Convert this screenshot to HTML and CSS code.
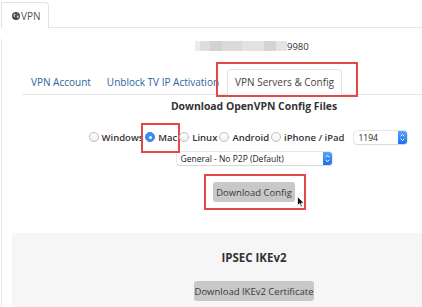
FILE: index.html
```html
<!DOCTYPE html>
<html>
<head>
<meta charset="utf-8">
<link rel="stylesheet" href="styles.css">
</head>
<body>
<div class="page">
  <div class="topbar">
    <div class="toptab">
      <svg class="globe" width="8" height="8" viewBox="0 0 8 8"><circle cx="4" cy="4" r="4" fill="#444"/><path d="M1.6 1.8 L3.4 1.4 L3.8 2.6 L2.8 3.4 L3.2 4.6 L2.2 5.6 L1.4 4.2 Z M4.6 1 L6.2 1.6 L5.4 2.4 Z M4.6 3.6 L6.6 3.4 L7 5 L5.6 6.6 L4.8 5.4 Z" fill="#bbb"/></svg>
      <span>VPN</span>
    </div>
  </div>
  <div class="panel">
    <div class="account"><span class="blur"><i class="b1"></i><i class="b2"></i><i class="b3"></i><i class="b4"></i><i class="b5"></i><i class="b6"></i><i class="b7"></i></span>9980</div>
    <div class="subtabs">
      <a class="subtab">VPN Account</a>
      <a class="subtab">Unblock TV IP Activation</a>
      <a class="subtab active">VPN Servers &amp; Config<span class="mark mark-tab"></span></a>
    </div>
    <div class="config">
      <h3 class="title">Download OpenVPN Config Files</h3>
      <div class="oslist">
        <label class="os"><span class="radio"></span>Windows</label>
        <label class="os os-mac"><span class="radio on"></span>Mac<span class="mark mark-mac"></span></label>
        <label class="os"><span class="radio"></span>Linux</label>
        <label class="os"><span class="radio"></span>Android</label>
        <label class="os"><span class="radio"></span>iPhone / iPad</label>
        <div class="select port"><span class="sel-text">1194</span><span class="stepper"><svg width="5" height="9" viewBox="0 0 5 9"><path d="M0.8 3.2 L2.5 1.4 L4.2 3.2 M0.8 5.8 L2.5 7.6 L4.2 5.8" fill="none" stroke="#fff" stroke-width="1"/></svg></span></div>
      </div>
      <div class="select profile"><span class="sel-text">General - No P2P (Default)</span><span class="stepper"><svg width="5" height="9" viewBox="0 0 5 9"><path d="M0.8 3.2 L2.5 1.4 L4.2 3.2 M0.8 5.8 L2.5 7.6 L4.2 5.8" fill="none" stroke="#fff" stroke-width="1"/></svg></span></div>
      <div class="btnwrap">
        <button class="btn btn-config">Download Config</button>
        <span class="mark mark-btn"></span>
        <svg class="cursor" width="8" height="12" viewBox="0 0 8 12"><path d="M0.5 0.5 L0.5 9.5 L2.6 7.6 L4 11 L5.4 10.4 L4 7.2 L7 7.2 Z" fill="#111" stroke="#fff" stroke-width="0.8"/></svg>
      </div>
    </div>
    <div class="ipsec">
      <h3 class="ipsec-title">IPSEC IKEv2</h3>
      <button class="btn btn-cert">Download IKEv2 Certificate</button>
    </div>
  </div>
</div>
</body>
</html>
```

FILE: styles.css
```css
html, body {
  margin: 0;
  padding: 0;
  overflow: hidden;
  background: #fff;
}
body {
  font-family: "Open Sans", "Liberation Sans", sans-serif;
  color: #333;
}
.page {
  width: 422px;
  height: 307px;
  overflow: hidden;
  box-sizing: border-box;
  padding-left: 1px;
}
.topbar {
  display: flex;
  border-bottom: 1px solid #e8e8e8;
  padding-top: 2px;
  box-sizing: border-box;
  height: 28px;
}
.toptab {
  width: 48px;
  height: 26px;
  box-sizing: border-box;
  border: 1px solid #e2e2e2;
  border-bottom: none;
  border-radius: 0 4px 0 0;
  background: #fff;
  margin-bottom: -1px;
  display: flex;
  align-items: center;
  padding-left: 10px;
  font-size: 10px;
  color: #555;
  gap: 1px;
}
.globe { flex: none; }
.panel {
  border-left: 1px solid #e6e6e6;
  padding-left: 10px;
}
.account {
  margin-top: 11px;
  margin-left: 183px;
  height: 14px;
  display: flex;
  align-items: center;
  font-size: 9.5px;
  color: #333;
}
.blur {
  display: flex;
  height: 10px;
  width: 92px;
}
.blur i { display: block; height: 10px; }
.b1 { width: 5px; background: #ececec; }
.b2 { width: 10px; background: #dedede; }
.b3 { width: 12px; background: #d2d2d2; }
.b4 { width: 20px; background: #dadada; }
.b5 { width: 22px; background: #e2e2e2; }
.b6 { width: 12px; background: #d4d4d4; }
.b7 { width: 11px; background: #e4e4e4; }
.subtabs {
  margin-top: 16px;
  margin-left: 10px;
  display: flex;
  height: 26px;
  border-bottom: 1px solid #e6e6e6;
  box-sizing: border-box;
}
.subtab {
  display: flex;
  align-items: center;
  padding: 0 8px 0 9px;
  font-size: 10px;
  color: #2a679e;
  height: 26px;
  box-sizing: border-box;
  position: relative;
  white-space: nowrap;
}
.subtab + .subtab { padding-left: 8px; }
.subtab.active {
  color: #444;
  border: 1px solid #e2e2e2;
  border-bottom-color: #fff;
  border-radius: 4px 4px 0 0;
  background: #fff;
  padding: 0 7px;
  margin-bottom: -1px;
  height: 26px;
}
.mark {
  position: absolute;
  border: 2px solid #e34848;
  pointer-events: none;
}
.mark-tab {
  left: -12px;
  right: -17px;
  top: -8px;
  bottom: -3px;
}
.config {
  display: flex;
  flex-direction: column;
  align-items: center;
  padding-left: 74px;
}
.title {
  margin: 4px 0 0;
  font-size: 10.4px;
  font-weight: 700;
  line-height: 14px;
  color: #333;
}
.oslist {
  margin-top: 17px;
  margin-right: 12px;
  display: flex;
  align-items: center;
  height: 14px;
  font-size: 9.5px;
  font-weight: 600;
  color: #333;
  white-space: nowrap;
}
.os {
  display: flex;
  align-items: center;
  position: relative;
  margin-right: 2px;
}
.radio {
  width: 10px;
  height: 10px;
  box-sizing: border-box;
  border-radius: 50%;
  border: 1px solid #bdbdbd;
  background: linear-gradient(#fff, #f1f1f1);
  margin-right: 3px;
  position: relative;
}
.radio.on {
  border-color: #2f80ea;
  background: #3a8ef6;
}
.radio.on::after {
  content: "";
  position: absolute;
  left: 2.5px;
  top: 2.5px;
  width: 3px;
  height: 3px;
  border-radius: 50%;
  background: #fff;
}
.mark-mac {
  left: -4px;
  right: -3px;
  top: -8px;
  bottom: -9px;
}
.select {
  display: flex;
  align-items: center;
  height: 13px;
  box-sizing: border-box;
  background: #fff;
  border-radius: 3px;
  box-shadow: 0 0 0 0.5px #cfcfcf, 0 1px 1px rgba(0,0,0,0.12);
  font-size: 8.5px;
  font-weight: 400;
  color: #222;
}
.sel-text {
  flex: 1;
  padding-left: 4px;
  white-space: nowrap;
}
.stepper {
  width: 9px;
  height: 13px;
  flex: none;
  border-radius: 0 3px 3px 0;
  background: linear-gradient(#5aa3fb, #1c70ec);
  display: flex;
  align-items: center;
  justify-content: center;
}
.port {
  width: 53px;
  margin-left: 8px;
}
.profile {
  width: 155px;
  margin-top: 8px;
}
.btnwrap {
  position: relative;
  margin-top: 17px;
}
.btn {
  font-family: "Open Sans", "Liberation Sans", sans-serif;
  height: 20px;
  border: none;
  border-radius: 3px;
  background: #c8c8c8;
  color: #3a3a3a;
  font-size: 9.5px;
  padding: 0;
  white-space: nowrap;
  display: block;
}
.btn-config { width: 82px; }
.mark-btn {
  left: -9px;
  right: -11px;
  top: -8px;
  bottom: -8px;
}
.cursor {
  position: absolute;
  left: 84px;
  top: 14px;
}
.ipsec {
  margin-top: 31px;
  background: #f6f6f6;
  display: flex;
  flex-direction: column;
  align-items: center;
  padding: 18px 0 7px 74px;
}
.ipsec-title {
  margin: 0;
  font-size: 11.5px;
  font-weight: 700;
  line-height: 14px;
  color: #333;
}
.btn-cert {
  margin-top: 16px;
  width: 120px;
}
```
